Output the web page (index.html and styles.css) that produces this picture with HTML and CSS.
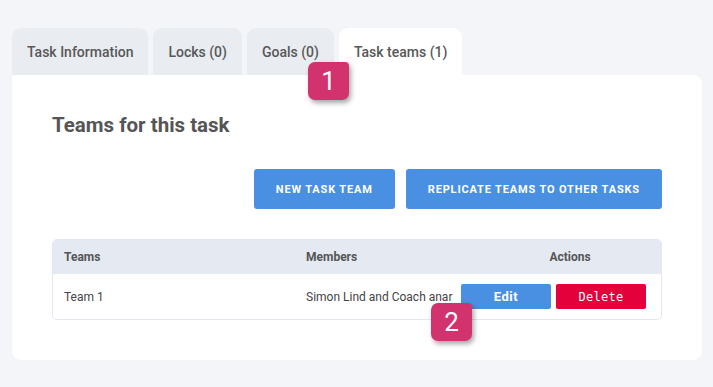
FILE: index.html
```html
<!DOCTYPE html>
<html lang="en">
<head>
    <meta charset="UTF-8">
    <meta name="viewport" content="width=device-width, initial-scale=1.0">
    <title>Task teams</title>
    <link rel="stylesheet" href="styles.css">
</head>
<body>
    <div class="page">
        <!-- Tabs -->
        <div class="tabs">
            <div class="tab">Task Information</div>
            <div class="tab">Locks (0)</div>
            <div class="tab">Goals (0)</div>
            <div class="tab active">Task teams (1)</div>
        </div>

        <!-- Panel -->
        <div class="panel">
            <h2 class="title">Teams for this task</h2>

            <div class="toolbar">
                <button class="btn">New task team</button>
                <button class="btn">Replicate teams to other tasks</button>
            </div>

            <div class="teams-table">
                <div class="row head">
                    <div class="cell">Teams</div>
                    <div class="cell">Members</div>
                    <div class="cell actions-head">Actions</div>
                </div>
                <div class="row">
                    <div class="cell">Team 1</div>
                    <div class="cell">Simon Lind and Coach anar</div>
                    <div class="cell actions">
                        <button class="btn-edit">Edit</button>
                        <button class="btn-delete">Delete</button>
                    </div>
                </div>
            </div>
        </div>

        <!-- Step badges -->
        <div class="badge badge-1">1</div>
        <div class="badge badge-2">2</div>
    </div>
</body>
</html>
```

FILE: styles.css
```css
/* General */
body {
    margin: 0;
    background: #f4f5f9;
    font-family: Roboto, 'Liberation Sans', sans-serif;
    color: #555;
}

.page {
    position: relative;
    padding: 28px 11px 0 12px;
}

/* Tabs */
.tabs {
    display: flex;
    gap: 5px;
}

.tab {
    height: 47px;
    padding: 0 15px;
    display: flex;
    align-items: center;
    background: #e9ecf1;
    border-radius: 9px 9px 0 0;
    font-size: 14px;
    font-weight: 500;
    color: #585858;
}

.tab.active {
    background: #fff;
}

/* Panel */
.panel {
    background: #fff;
    border-radius: 0 9px 9px 9px;
    padding: 35px 40px 40px;
}

.title {
    margin: 0;
    font-size: 20.5px;
    font-weight: bold;
    color: #555;
    line-height: 30px;
}

.toolbar {
    display: flex;
    justify-content: flex-end;
    gap: 11px;
    margin-top: 29px;
}

.btn {
    height: 40px;
    padding: 0 22px;
    background: #4a90e2;
    color: #fff;
    border: none;
    border-radius: 3px;
    font-family: Roboto, sans-serif;
    font-size: 11px;
    font-weight: bold;
    letter-spacing: 0.85px;
    text-transform: uppercase;
}

/* Table */
.teams-table {
    margin-top: 30px;
    border: 1px solid #e4e7ee;
    border-radius: 5px;
    overflow: hidden;
}

.row {
    display: grid;
    grid-template-columns: 242px 166px 1fr;
    align-items: center;
    height: 45px;
    font-size: 12px;
    color: #444;
}

.row.head {
    height: 34px;
    background: #e4e9f2;
    font-weight: bold;
    color: #555;
}

.cell {
    padding-left: 11px;
}

.actions-head {
    padding-left: 18px;
    text-align: center;
}

.actions {
    display: flex;
    gap: 5px;
    padding-left: 0;
}

.btn-edit, .btn-delete {
    width: 90px;
    height: 25px;
    border: none;
    border-radius: 2px;
    color: #fff;
}

.btn-edit {
    background: #4a90e2;
    font-family: Roboto, sans-serif;
    font-size: 13px;
    font-weight: bold;
    letter-spacing: 0.5px;
}

.btn-delete {
    background: #e4003a;
    font-family: 'DejaVu Sans Mono', monospace;
    font-size: 12px;
    letter-spacing: 0.3px;
}

/* Badges */
.badge {
    position: absolute;
    width: 41px;
    height: 38px;
    display: flex;
    align-items: center;
    justify-content: center;
    background: #d2336f;
    color: #fff;
    font-size: 26px;
    border-radius: 7px 4px 7px 7px;
    box-shadow: 2px 3px 5px rgba(0, 0, 0, 0.35);
}

.badge-1 {
    left: 308px;
    top: 62px;
}

.badge-2 {
    left: 431px;
    top: 303px;
}
```
